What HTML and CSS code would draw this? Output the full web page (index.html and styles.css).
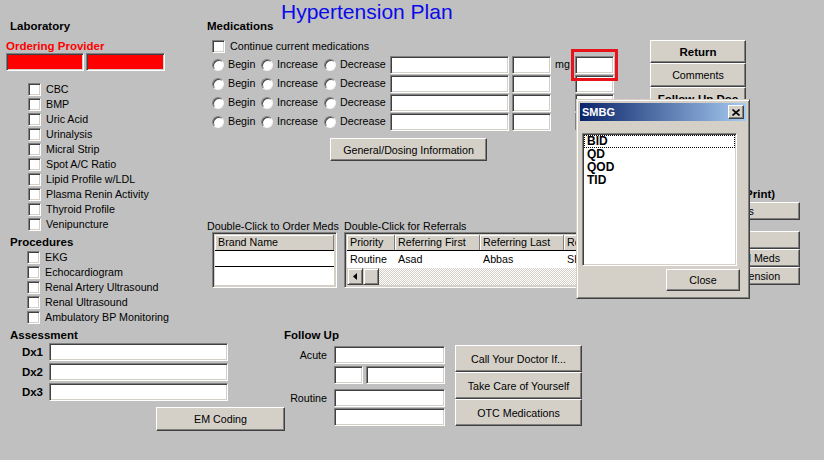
FILE: index.html
```html
<!DOCTYPE html>
<html lang="en">
<head>
    <meta charset="UTF-8">
    <title>Hypertension Plan</title>
    <link rel="stylesheet" href="styles.css">
</head>
<body>

    <div class="form">
        <div class="top">

            <!-- Laboratory / Procedures -->
            <div class="lab-col">
                <div class="heading lab-heading">Laboratory</div>
                <div class="provider-label">Ordering Provider</div>
                <div class="provider-boxes">
                    <input class="field red-field first" type="text">
                    <input class="field red-field second" type="text">
                </div>
                <div class="check-list lab-list">
                    <label class="check"><input type="checkbox">CBC</label>
                    <label class="check"><input type="checkbox">BMP</label>
                    <label class="check"><input type="checkbox">Uric Acid</label>
                    <label class="check"><input type="checkbox">Urinalysis</label>
                    <label class="check"><input type="checkbox">Micral Strip</label>
                    <label class="check"><input type="checkbox">Spot A/C Ratio</label>
                    <label class="check"><input type="checkbox">Lipid Profile w/LDL</label>
                    <label class="check"><input type="checkbox">Plasma Renin Activity</label>
                    <label class="check"><input type="checkbox">Thyroid Profile</label>
                    <label class="check"><input type="checkbox">Venipuncture</label>
                </div>
                <div class="heading proc-heading">Procedures</div>
                <div class="check-list proc-list">
                    <label class="check"><input type="checkbox">EKG</label>
                    <label class="check"><input type="checkbox">Echocardiogram</label>
                    <label class="check"><input type="checkbox">Renal Artery Ultrasound</label>
                    <label class="check"><input type="checkbox">Renal Ultrasound</label>
                    <label class="check"><input type="checkbox">Ambulatory BP Monitoring</label>
                </div>
            </div>

            <!-- Medications -->
            <div class="mid-col">
                <div class="page-title">Hypertension Plan</div>
                <div class="heading med-heading">Medications</div>
                <label class="check continue-row"><input type="checkbox">Continue current medications</label>

                <div class="med-row first-row">
                    <label class="radio begin"><input type="radio" name="med1">Begin</label>
                    <label class="radio increase"><input type="radio" name="med1">Increase</label>
                    <label class="radio decrease"><input type="radio" name="med1">Decrease</label>
                    <input class="field med-name" type="text">
                    <input class="field med-dose" type="text">
                    <span class="unit">mg</span>
                    <input class="field med-freq" type="text">
                </div>
                <div class="med-row">
                    <label class="radio begin"><input type="radio" name="med2">Begin</label>
                    <label class="radio increase"><input type="radio" name="med2">Increase</label>
                    <label class="radio decrease"><input type="radio" name="med2">Decrease</label>
                    <input class="field med-name" type="text">
                    <input class="field med-dose" type="text">
                    <span class="unit"></span>
                    <input class="field med-freq" type="text">
                </div>
                <div class="med-row">
                    <label class="radio begin"><input type="radio" name="med3">Begin</label>
                    <label class="radio increase"><input type="radio" name="med3">Increase</label>
                    <label class="radio decrease"><input type="radio" name="med3">Decrease</label>
                    <input class="field med-name" type="text">
                    <input class="field med-dose" type="text">
                    <span class="unit"></span>
                    <input class="field med-freq" type="text">
                </div>
                <div class="med-row">
                    <label class="radio begin"><input type="radio" name="med4">Begin</label>
                    <label class="radio increase"><input type="radio" name="med4">Increase</label>
                    <label class="radio decrease"><input type="radio" name="med4">Decrease</label>
                    <input class="field med-name" type="text">
                    <input class="field med-dose" type="text">
                    <span class="unit"></span>
                    <input class="field med-freq" type="text">
                </div>

                <button class="btn dosing-btn">General/Dosing Information</button>

                <div class="captions">
                    <span class="meds-caption">Double-Click to Order Meds</span>
                    <span>Double-Click for Referrals</span>
                </div>
                <div class="tables">
                    <div class="grid brand-grid">
                        <div class="grid-head"><span class="c-brand">Brand Name</span></div>
                        <div class="grid-row"><span class="c-brand"></span></div>
                        <div class="grid-row last"><span class="c-brand"></span></div>
                    </div>
                    <div class="grid ref-grid">
                        <div class="grid-body">
                            <div class="grid-head">
                                <span class="c-pri">Priority</span>
                                <span class="c-first">Referring First</span>
                                <span class="c-last">Referring Last</span>
                                <span class="c-spec">Referring Specialty</span>
                            </div>
                            <div class="grid-row">
                                <span class="c-pri">Routine</span>
                                <span class="c-first">Asad</span>
                                <span class="c-last">Abbas</span>
                                <span class="c-spec">Shah</span>
                            </div>
                            <div class="grid-row">
                                <span class="c-pri"></span>
                                <span class="c-first"></span>
                                <span class="c-last"></span>
                                <span class="c-spec">-</span>
                            </div>
                        </div>
                        <div class="hscroll">
                            <span class="scroll-btn">
                                <svg width="4" height="7" viewBox="0 0 4 7"><path d="M4 0v7L0 3.5z" fill="#000"/></svg>
                            </span>
                            <span class="scroll-thumb"></span>
                            <span class="scroll-track"></span>
                        </div>
                    </div>
                </div>
            </div>

            <!-- Side buttons -->
            <div class="right-col">
                <button class="btn side-btn bold">Return</button>
                <button class="btn side-btn tall">Comments</button>
                <button class="btn side-btn tall bold">Follow-Up Doc</button>
                <div class="print-block">
                    <div class="heading print-heading">Handouts (Print)</div>
                    <button class="btn print-btn first">Notes</button>
                    <button class="btn print-btn gap">Diet</button>
                    <button class="btn print-btn">Prescribed Meds</button>
                    <button class="btn print-btn">On Hypertension</button>
                </div>
            </div>
        </div>

        <div class="bottom">
            <!-- Assessment -->
            <div class="assess-col">
                <div class="heading assess-heading">Assessment</div>
                <div class="dx-row first"><span class="dx-label">Dx1</span><input class="field dx-field" type="text"></div>
                <div class="dx-row"><span class="dx-label">Dx2</span><input class="field dx-field" type="text"></div>
                <div class="dx-row"><span class="dx-label">Dx3</span><input class="field dx-field" type="text"></div>
                <button class="btn em-btn">EM Coding</button>
            </div>

            <!-- Follow Up -->
            <div class="follow-col">
                <div class="heading">Follow Up</div>
                <div class="follow-body">
                    <div class="follow-fields">
                        <div class="fu-row r1"><span class="fu-label">Acute</span><input class="field fu-field" type="text"></div>
                        <div class="fu-row r2"><span class="fu-label"></span><input class="field fu-small" type="text"><input class="field fu-rest" type="text"></div>
                        <div class="fu-row r3"><span class="fu-label">Routine</span><input class="field fu-field" type="text"></div>
                        <div class="fu-row r4"><span class="fu-label"></span><input class="field fu-field" type="text"></div>
                    </div>
                    <div class="follow-buttons">
                        <button class="btn fu-btn">Call Your Doctor If...</button>
                        <button class="btn fu-btn">Take Care of Yourself</button>
                        <button class="btn fu-btn">OTC Medications</button>
                    </div>
                </div>
            </div>
        </div>
    </div>

    <!-- highlighted frequency field -->
    <div class="highlight"></div>

    <!-- SMBG dialog -->
    <div class="dialog">
        <div class="title-bar">
            <span>SMBG</span>
            <span class="close-x">
                <svg width="8" height="7" viewBox="0 0 8 7"><path d="M0.5 0.5l7 6M7.5 0.5l-7 6" stroke="#000" stroke-width="1.6"/></svg>
            </span>
        </div>
        <ul class="freq-list">
            <li class="focused">BID</li>
            <li>QD</li>
            <li>QOD</li>
            <li>TID</li>
        </ul>
        <button class="btn close-btn">Close</button>
    </div>

</body>
</html>
```

FILE: styles.css
```css
/* Global */
* {
    margin: 0;
    padding: 0;
    box-sizing: border-box;
}

body {
    width: 824px;
    height: 460px;
    overflow: hidden;
    position: relative;
    background: #c0c0c0;
    color: #000;
    font: 10.7px/13px "Liberation Sans", Arial, sans-serif;
}

.heading {
    font-weight: bold;
    font-size: 11.5px;
    line-height: 14px;
    white-space: nowrap;
}

/* Win classic controls */
.field {
    appearance: none;
    display: block;
    height: 18px;
    background: #fff;
    border: 1px solid;
    border-color: #808080 #fff #fff #808080;
    box-shadow: inset 1px 1px #404040, inset -1px -1px #d4d0c8;
    font: inherit;
    padding: 0 3px;
    outline: none;
    flex: none;
}

.btn {
    appearance: none;
    display: block;
    background: #d4d0c8;
    border: 1px solid;
    border-color: #fff #404040 #404040 #fff;
    box-shadow: inset -1px -1px #808080;
    color: #000;
    font: 10.7px "Liberation Sans", Arial, sans-serif;
    text-align: center;
    white-space: nowrap;
    overflow: hidden;
}

.bold {
    font-weight: bold;
    font-size: 11.5px;
}

input[type="checkbox"] {
    appearance: none;
    flex: none;
    width: 13px;
    height: 13px;
    background: #fff;
    border: 1px solid;
    border-color: #808080 #fff #fff #808080;
    box-shadow: inset 1px 1px #404040, inset -1px -1px #d4d0c8;
}

input[type="radio"] {
    appearance: none;
    flex: none;
    width: 12px;
    height: 12px;
    border-radius: 50%;
    background: #fff;
    border: 1px solid;
    border-color: #808080 #f4f4f4 #f4f4f4 #808080;
    box-shadow: inset 1px 1px #404040;
}

.check {
    display: flex;
    align-items: center;
    gap: 5px;
    height: 15px;
    white-space: nowrap;
}

/* Layout */
.top {
    display: flex;
    height: 325px;
}

.bottom {
    display: flex;
    padding-top: 3px;
}

/* Laboratory column */
.lab-col {
    width: 206px;
    padding: 19px 0 0 6px;
}

.lab-heading,
.proc-heading {
    margin-left: 4px;
}

.provider-label {
    margin-top: 7px;
    color: #f00;
    font-weight: bold;
    font-size: 11.5px;
    line-height: 13px;
}

.provider-boxes {
    display: flex;
    gap: 2px;
}

.red-field {
    background: #f00;
}

.red-field.first {
    width: 78px;
}

.red-field.second {
    width: 79px;
}

.lab-list {
    margin: 11px 0 0 22px;
}

.proc-heading {
    margin-top: 3px;
}

.proc-list {
    margin: 1px 0 0 21px;
}

/* Medications column */
.mid-col {
    width: 444px;
    padding-top: 2px;
}

.page-title {
    margin-left: 75px;
    color: #0a0ae8;
    font-size: 21px;
    line-height: 20px;
}

.med-heading {
    margin: -3px 0 0 1px;
}

.continue-row {
    margin: 6px 0 0 6px;
}

.med-row {
    display: flex;
    align-items: center;
    height: 19px;
    padding-left: 6px;
}

.med-row.first-row {
    margin-top: 1px;
}

.radio {
    display: flex;
    align-items: center;
    gap: 4px;
    white-space: nowrap;
}

.radio.begin {
    width: 49px;
}

.radio.increase {
    width: 63px;
}

.radio.decrease {
    width: 66px;
}

.med-name {
    width: 119px;
}

.med-dose {
    width: 39px;
    margin-left: 3px;
}

.unit {
    width: 24px;
    padding-left: 4px;
}

.med-freq {
    width: 39px;
}

.dosing-btn {
    width: 157px;
    height: 23px;
    margin: 7px 0 0 124px;
}

.captions {
    display: flex;
    margin: 59px 0 0 1px;
    line-height: 12px;
    white-space: nowrap;
}

.meds-caption {
    width: 137px;
}

.tables {
    display: flex;
    gap: 7px;
    margin-left: 6px;
}

/* Grids */
.grid {
    height: 56px;
    padding: 2px;
    background: #d4d0c8;
    border: 1px solid;
    border-color: #808080 #fff #fff #808080;
    box-shadow: inset 1px 1px #404040;
    overflow: hidden;
}

.grid-head,
.grid-row {
    display: flex;
    white-space: nowrap;
}

.grid-head {
    height: 16px;
    border-bottom: 1px solid #000;
}

.grid-head span {
    height: 15px;
    padding: 1px 0 0 3px;
    border-right: 1px solid #808080;
    box-shadow: inset 1px 1px #fff;
    overflow: hidden;
    flex: none;
}

.grid-row {
    height: 16px;
    background: #fff;
    border-bottom: 1px solid #000;
}

.grid-row span {
    padding: 2px 0 0 3px;
    overflow: hidden;
    flex: none;
}

.grid-row.last {
    height: 18px;
    border-bottom: none;
}

.brand-grid {
    width: 125px;
}

.c-brand {
    width: 119px;
}

.ref-grid {
    width: 296px;
    display: flex;
    flex-direction: column;
}

.grid-body {
    flex: 1;
    overflow: hidden;
}

.ref-grid .grid-row {
    height: 17px;
    border-bottom: none;
}

.c-pri {
    width: 48px;
}

.c-first {
    width: 85px;
}

.c-last {
    width: 84px;
}

.c-spec {
    width: 110px;
}

.hscroll {
    display: flex;
    height: 17px;
    flex: none;
}

.scroll-btn,
.scroll-thumb {
    flex: none;
    width: 16px;
    background: #d4d0c8;
    border: 1px solid;
    border-color: #d4d0c8 #404040 #404040 #d4d0c8;
    box-shadow: inset 1px 1px #fff, inset -1px -1px #808080;
}

.scroll-btn {
    display: flex;
    align-items: center;
    justify-content: center;
}

.scroll-track {
    flex: 1;
    background: repeating-conic-gradient(#fff 0 25%, #d4d0c8 0 50%) 0 0 / 2px 2px;
}

/* Right column */
.right-col {
    padding-top: 40px;
}

.side-btn {
    width: 96px;
    height: 23px;
}

.side-btn.tall {
    height: 24px;
}

.print-block {
    width: 120px;
    margin: 76px 0 0 30px;
}

.print-heading {
    padding-left: 5px;
}

.print-btn {
    width: 120px;
    height: 18px;
}

.print-btn.first {
    margin-top: 1px;
}

.print-btn.gap {
    margin-top: 11px;
}

/* Assessment */
.assess-col {
    width: 284px;
}

.assess-heading {
    margin-left: 10px;
}

.dx-row {
    display: flex;
    align-items: center;
    height: 18px;
    margin-top: 2px;
}

.dx-row.first {
    margin-top: 1px;
}

.dx-label {
    width: 43px;
    text-align: right;
    font-weight: bold;
    font-size: 11.5px;
}

.dx-field {
    width: 179px;
    margin-left: 6px;
}

.em-btn {
    width: 129px;
    height: 24px;
    margin: 6px 0 0 156px;
}

/* Follow up */
.follow-body {
    display: flex;
    margin-top: 3px;
}

.follow-fields {
    width: 161px;
}

.fu-row {
    display: flex;
    align-items: center;
    height: 18px;
}

.fu-row.r1 {
    margin-top: 1px;
}

.fu-row.r2 {
    margin-top: 2px;
}

.fu-row.r3 {
    margin-top: 5px;
}

.fu-row.r4 {
    margin-top: 1px;
}

.fu-label {
    width: 43px;
    margin-right: 7px;
    text-align: right;
}

.fu-field {
    width: 111px;
}

.fu-small {
    width: 29px;
}

.fu-rest {
    width: 79px;
    margin-left: 3px;
}

.follow-buttons {
    margin-left: 10px;
}

.fu-btn {
    width: 127px;
    height: 27px;
}

/* Highlight around the frequency field */
.highlight {
    position: absolute;
    left: 571px;
    top: 49px;
    width: 47px;
    height: 32px;
    border: 3px solid #e8141c;
}

/* SMBG dialog */
.dialog {
    position: absolute;
    left: 576px;
    top: 99px;
    width: 174px;
    height: 200px;
    padding: 3px;
    background: #d4d0c8;
    border: 1px solid;
    border-color: #d4d0c8 #404040 #404040 #d4d0c8;
    box-shadow: inset 1px 1px #fff, inset -1px -1px #808080;
}

.title-bar {
    display: flex;
    align-items: center;
    justify-content: space-between;
    height: 18px;
    padding: 0 2px 0 2px;
    background: linear-gradient(to right, #0a246a, #a6caf0);
    color: #fff;
    font-weight: bold;
    font-size: 11px;
}

.close-x {
    display: flex;
    align-items: center;
    justify-content: center;
    width: 16px;
    height: 14px;
    background: #d4d0c8;
    border: 1px solid;
    border-color: #fff #404040 #404040 #fff;
    box-shadow: inset -1px -1px #808080;
}

.freq-list {
    list-style: none;
    width: 155px;
    height: 133px;
    margin: 12px 0 0 2px;
    padding: 1px;
    background: #fff;
    border: 1px solid;
    border-color: #808080 #fff #fff #808080;
    box-shadow: inset 1px 1px #404040, inset -1px -1px #d4d0c8;
    font-weight: bold;
    font-size: 12px;
}

.freq-list li {
    height: 13px;
    padding-left: 3px;
    line-height: 13px;
}

.freq-list li.focused {
    outline: 1px dotted #000;
    outline-offset: -1px;
}

.close-btn {
    width: 74px;
    height: 22px;
    margin: 3px 0 0 86px;
}
```
